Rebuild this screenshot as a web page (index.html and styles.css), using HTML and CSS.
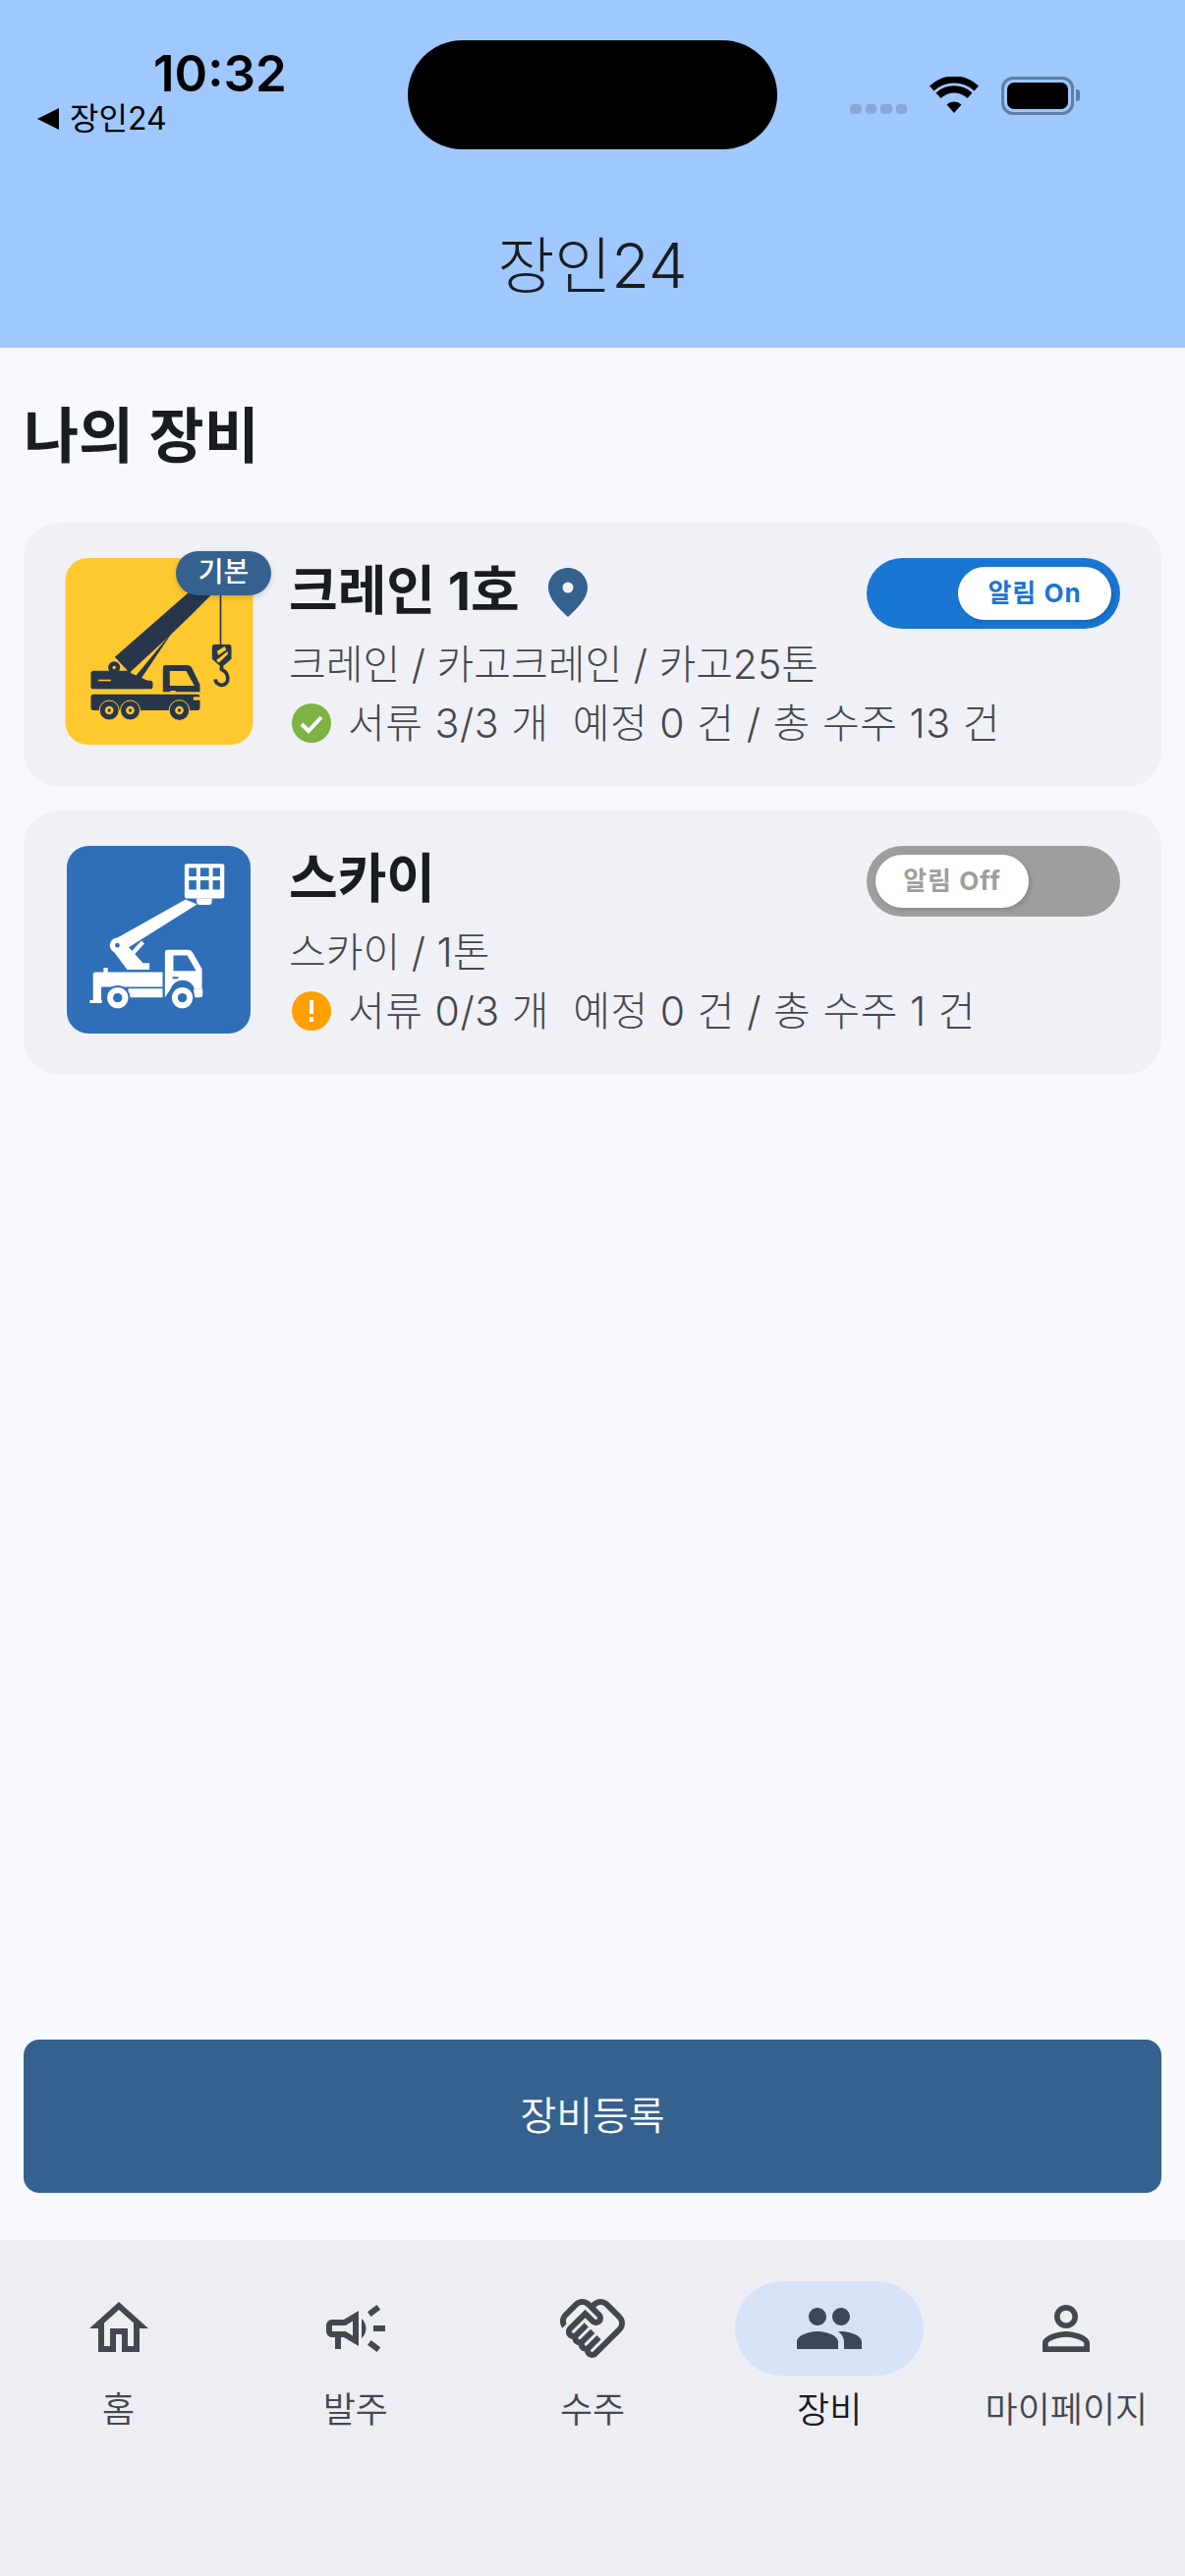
FILE: index.html
```html
<!DOCTYPE html>
<html lang="ko">
<head>
    <meta charset="UTF-8">
    <meta name="viewport" content="width=device-width, initial-scale=1.0">
    <title>장인24</title>
    <link rel="stylesheet" href="styles.css">
</head>
<body>
    <header class="app-header">
        <div class="status-bar">
            <div class="status-left">
                <div class="clock">10:32</div>
                <div class="back-link"><span class="back-arrow"></span>장인24</div>
            </div>
            <div class="island"></div>
            <div class="status-right">
                <div class="signal"><span></span><span></span><span></span><span></span></div>
                <svg class="wifi" viewBox="0 0 50 37">
                    <path d="M25 37 L17.5 28.5 A11 11 0 0 1 32.5 28.5 Z"/>
                    <path d="M11.5 22 L6.5 16.5 A27 27 0 0 1 43.5 16.5 L38.5 22 A19.5 19.5 0 0 0 11.5 22 Z"/>
                    <path d="M4.5 14.5 L0 9.5 A36 36 0 0 1 50 9.5 L45.5 14.5 A30 30 0 0 0 4.5 14.5 Z"/>
                </svg>
                <div class="battery"><div class="battery-level"></div></div>
                <div class="battery-nub"></div>
            </div>
        </div>
        <div class="app-title">장인24</div>
    </header>

    <main class="content">
        <h1 class="section-title">나의 장비</h1>

        <div class="card">
            <div class="thumb">
                <svg class="thumb-img" viewBox="49 38 573 570">
                    <rect x="49" y="38" width="573" height="570" rx="68" fill="#fec82f"/>
                    <g fill="#27364a">
                        <path d="M200 340 L440 130 L495 150 L440 205 L378 265 L245 388 Z"/>
                        <path d="M382 255 L278 410 L262 400 L316 335 Z"/>
                        <circle cx="198" cy="372" r="18"/>
                        <path d="M135 382 H245 L250 390 L300 412 H308 Q316 412 316 420 V430 Q316 438 308 438 H135 Q127 438 127 430 V390 Q127 382 135 382 Z"/>
                        <path d="M355 365 H420 Q430 365 436 375 L460 425 V447 H347 V373 Q347 365 355 365 Z"/>
                        <rect x="127" y="454" width="333" height="49" rx="8"/>
                        <rect x="440" y="462" width="22" height="10" fill="#fec82f"/>
                        <path d="M497 302 H550 Q556 302 556 310 V346 L526 372 L497 346 V310 Q497 302 503 302 Z"/>
                    </g>
                    <circle cx="198" cy="372" r="5" fill="#fec82f"/>
                    <rect x="150" y="409" width="38" height="5" fill="#fec82f"/>
                    <path d="M368 383 H418 L443 428 H368 Z" fill="#fec82f"/>
                    <rect x="370" y="443" width="16" height="5" fill="#fec82f"/>
                    <g class="wheel">
                        <circle cx="183" cy="503" r="30"/>
                        <circle cx="247" cy="503" r="30"/>
                        <circle cx="397" cy="503" r="31"/>
                    </g>
                    <g fill="#fec82f">
                        <circle cx="183" cy="503" r="13"/>
                        <circle cx="247" cy="503" r="13"/>
                        <circle cx="397" cy="503" r="13"/>
                    </g>
                    <g fill="#27364a">
                        <circle cx="183" cy="503" r="5"/>
                        <circle cx="247" cy="503" r="5"/>
                        <circle cx="397" cy="503" r="5"/>
                    </g>
                    <path d="M523 150 V302" stroke="#27364a" stroke-width="5" fill="none"/>
                    <path d="M512 322 L535 308 L541 318 L516 335 Z M510 350 L545 322 V332 L517 358 Z" fill="#fec82f"/>
                    <path d="M526 368 V378 Q546 388 545 406 A19 19 0 0 1 507 408" stroke="#27364a" stroke-width="11" fill="none"/>
                </svg>
                <span class="badge">기본</span>
            </div>
            <div class="info">
                <div class="info-head">
                    <div class="name">크레인 1호</div>
                    <svg class="pin" viewBox="0 0 40 50">
                        <path fill-rule="evenodd" d="M20 0 C9 0 0 8.8 0 20 C0 32 12 42 20 50 C28 42 40 32 40 20 C40 8.8 31 0 20 0 Z M20 14.5 A5.5 5.5 0 1 1 20 25.5 A5.5 5.5 0 1 1 20 14.5 Z"/>
                    </svg>
                    <div class="toggle on"><div class="knob">알림 On</div></div>
                </div>
                <div class="spec">크레인 / 카고크레인 / 카고25톤</div>
                <div class="stat">
                    <svg class="stat-icon" viewBox="0 0 40 40">
                        <circle cx="20" cy="20" r="20" fill="#7cb342"/>
                        <path d="M10 21 L17 28 L30 14" stroke="#fff" stroke-width="4" fill="none"/>
                    </svg>
                    <span>서류 3/3 개&nbsp; 예정 0 건 / 총 수주 13 건</span>
                </div>
            </div>
        </div>

        <div class="card">
            <div class="thumb">
                <svg class="thumb-img sky" viewBox="53 35 560 572">
                    <rect x="53" y="35" width="560" height="572" rx="66" fill="#2e6fb8"/>
                    <g fill="#fff">
                        <rect x="412" y="90" width="121" height="105" rx="6"/>
                        <path d="M448 195 H495 V205 Q495 215 485 215 H460 Q450 215 448 205 Z"/>
                        <path d="M195 322 L415 198 L450 213 L225 355 Z"/>
                        <circle cx="207" cy="338" r="23"/>
                        <path d="M192 352 L222 322 L285 392 H305 V412 H237 Z"/>
                        <path d="M140 420 H165 V406 H178 V420 H345 V465 H158 V505 H160 V514 H123 V505 H133 V428 Q133 420 140 420 Z"/>
                        <path d="M240 470 H345 V497 H240 Z"/>
                        <path d="M360 352 H420 Q432 352 438 362 L465 410 V470 H442 A38 38 0 0 0 370 470 L352 497 V360 Q352 352 360 352 Z"/>
                        <path d="M440 470 H467 V490 Q467 497 460 497 H440 Z"/>
                    </g>
                    <g fill="#2e6fb8">
                        <rect x="425" y="102" width="23" height="26"/>
                        <rect x="460" y="102" width="26" height="26"/>
                        <rect x="498" y="102" width="22" height="26"/>
                        <rect x="425" y="140" width="23" height="28"/>
                        <rect x="460" y="140" width="26" height="28"/>
                        <rect x="498" y="140" width="22" height="28"/>
                        <circle cx="207" cy="338" r="7"/>
                        <path d="M378 369 H420 L447 416 H378 Z"/>
                        <rect x="375" y="434" width="18" height="6"/>
                        <circle cx="208" cy="498" r="38"/>
                        <circle cx="405" cy="498" r="38"/>
                    </g>
                    <path d="M245 372 L285 328" stroke="#fff" stroke-width="13" fill="none"/>
                    <circle cx="208" cy="498" r="32" fill="#fff"/>
                    <circle cx="405" cy="498" r="32" fill="#fff"/>
                    <circle cx="208" cy="498" r="14" fill="#2e6fb8"/>
                    <circle cx="405" cy="498" r="14" fill="#2e6fb8"/>
                </svg>
            </div>
            <div class="info">
                <div class="info-head">
                    <div class="name">스카이</div>
                    <div class="toggle off"><div class="knob">알림 Off</div></div>
                </div>
                <div class="spec">스카이 / 1톤</div>
                <div class="stat">
                    <svg class="stat-icon" viewBox="0 0 40 40">
                        <circle cx="20" cy="20" r="20" fill="#ffa000"/>
                        <rect x="18" y="9" width="4" height="14" fill="#fff"/>
                        <rect x="18" y="26" width="4" height="5" fill="#fff"/>
                    </svg>
                    <span>서류 0/3 개&nbsp; 예정 0 건 / 총 수주 1 건</span>
                </div>
            </div>
        </div>

        <button class="add-btn">장비등록</button>
    </main>

    <nav class="bottom-nav">
        <div class="nav-item">
            <div class="nav-icon">
                <svg viewBox="0 0 24 24"><path d="M12 5.69l5 4.5V18h-2v-6H9v6H7v-7.81l5-4.5M12 3L2 12h3v8h6v-6h2v6h6v-8h3L12 3z"/></svg>
            </div>
            <span class="nav-label">홈</span>
        </div>
        <div class="nav-item">
            <div class="nav-icon">
                <svg viewBox="0 0 24 24"><path d="M18 11v2h4v-2h-4zm-2 6.61c.96.71 2.21 1.65 3.2 2.39.4-.53.8-1.07 1.2-1.6-.99-.74-2.24-1.68-3.2-2.4-.4.54-.8 1.08-1.2 1.61zM20.4 5.6c-.4-.53-.8-1.07-1.2-1.6-.99.74-2.24 1.68-3.2 2.4.4.53.8 1.07 1.2 1.6.96-.72 2.21-1.65 3.2-2.4zM4 9c-1.1 0-2 .9-2 2v2c0 1.1.9 2 2 2h1v4h2v-4h1l5 3V6L8 9H4zm5.03 1.71L11 9.53v4.94l-1.97-1.18-.48-.29H4v-2h4.55l.48-.29zM15.5 12c0-1.33-.58-2.53-1.5-3.35v6.69c.92-.81 1.5-2.01 1.5-3.34z"/></svg>
            </div>
            <span class="nav-label">발주</span>
        </div>
        <div class="nav-item">
            <div class="nav-icon">
                <svg viewBox="0 0 24 24"><path d="M12.22 19.85c-.18.18-.5.21-.71 0-.18-.18-.21-.5 0-.71l3.39-3.39-1.41-1.41-3.39 3.39c-.19.2-.51.19-.71 0-.21-.21-.18-.53 0-.71l3.39-3.39-1.41-1.41-3.39 3.39c-.18.18-.5.21-.71 0-.19-.19-.19-.51 0-.71l3.39-3.39-1.42-1.41-3.39 3.39c-.18.18-.5.21-.71 0-.19-.2-.19-.51 0-.71L9.52 8.4l1.87 1.86c.95.95 2.59.94 3.54 0 .98-.98.98-2.56 0-3.54l-1.86-1.86.28-.28c.78-.78 2.05-.78 2.83 0l4.24 4.24c.78.78.78 2.05 0 2.83l-8.2 8.2zm9.61-6.78c1.56-1.56 1.56-4.09 0-5.66l-4.24-4.24c-1.56-1.56-4.09-1.56-5.66 0l-.28.28-.28-.28c-1.56-1.56-4.09-1.56-5.66 0L2.17 6.71c-1.42 1.42-1.55 3.63-.4 5.19l1.45-1.45c-.39-.75-.26-1.7.37-2.33l3.54-3.54c.78-.78 2.05-.78 2.83 0l3.56 3.56c.18.18.21.5 0 .71-.21.21-.53.18-.71 0L9.52 5.57l-5.8 5.79c-.98.97-.98 2.56 0 3.54.39.39.89.63 1.42.7.07.52.3 1.02.7 1.42.4.4.9.63 1.42.7.07.52.3 1.02.7 1.42.4.4.9.63 1.42.7.07.54.31 1.03.7 1.42.47.47 1.1.73 1.77.73.67 0 1.3-.26 1.77-.73l8.21-8.19z"/></svg>
            </div>
            <span class="nav-label">수주</span>
        </div>
        <div class="nav-item active">
            <div class="nav-icon">
                <svg viewBox="0 0 24 24"><path d="M16 11c1.66 0 2.99-1.34 2.99-3S17.66 5 16 5c-1.66 0-3 1.34-3 3s1.34 3 3 3zm-8 0c1.66 0 2.99-1.34 2.99-3S9.66 5 8 5C6.34 5 5 6.34 5 8s1.34 3 3 3zm0 2c-2.33 0-7 1.17-7 3.5V19h14v-2.5c0-2.33-4.67-3.5-7-3.5zm8 0c-.29 0-.62.02-.97.05 1.16.84 1.97 1.97 1.97 3.45V19h6v-2.5c0-2.33-4.67-3.5-7-3.5z"/></svg>
            </div>
            <span class="nav-label">장비</span>
        </div>
        <div class="nav-item">
            <div class="nav-icon">
                <svg viewBox="0 0 24 24"><path d="M12 5.9c1.16 0 2.1.94 2.1 2.1s-.94 2.1-2.1 2.1S9.9 9.16 9.9 8s.94-2.1 2.1-2.1m0 9c2.97 0 6.1 1.46 6.1 2.1v1.1H5.9V17c0-.64 3.13-2.1 6.1-2.1M12 4C9.79 4 8 5.79 8 8s1.79 4 4 4 4-1.79 4-4-1.79-4-4-4zm0 9c-2.67 0-8 1.34-8 4v3h16v-3c0-2.66-5.33-4-8-4z"/></svg>
            </div>
            <span class="nav-label">마이페이지</span>
        </div>
    </nav>
</body>
</html>
```

FILE: styles.css
```css
* {
    box-sizing: border-box;
}

body {
    font-family: Inter, "Noto Sans CJK KR", sans-serif;
    margin: 0;
    width: 1206px;
    height: 2622px;
    display: flex;
    flex-direction: column;
    background: #f8f9ff;
    color: #191c20;
    overflow: hidden;
}

/* header + fake ios status bar */
.app-header {
    height: 354px;
    background: #9fc8fe;
    padding-top: 41px;
}

.status-bar {
    display: grid;
    grid-template-columns: 415px 376px 1fr;
    height: 111px;
}

.status-left {
    padding: 5px 0 0 38px;
}

.clock {
    font-size: 51px;
    font-weight: 600;
    line-height: 58px;
    margin-left: 118px;
    color: #000;
}

.back-link {
    display: flex;
    align-items: center;
    font-size: 32px;
    line-height: 40px;
    margin-top: -3px;
    color: #000;
}

.back-arrow {
    width: 0;
    height: 0;
    border-top: 11px solid transparent;
    border-bottom: 11px solid transparent;
    border-right: 22px solid #000;
    margin-right: 11px;
}

.island {
    background: #000;
    border-radius: 56px;
}

.status-right {
    display: flex;
    align-items: flex-start;
    padding: 37px 0 0 74px;
}

.signal {
    display: flex;
    gap: 4px;
    margin: 28px 23px 0 0;
}

.signal span {
    width: 11.5px;
    height: 10px;
    border-radius: 4px;
    background: #87a9d3;
}

.wifi {
    width: 50px;
    height: 37px;
    margin-right: 23px;
    fill: #000;
}

.battery {
    width: 74px;
    height: 39px;
    border: 3px solid #5f7ea8;
    border-radius: 12px;
    padding: 3px;
}

.battery-level {
    height: 100%;
    background: #000;
    border-radius: 7px;
}

.battery-nub {
    width: 4px;
    height: 12px;
    margin: 13px 0 0 2px;
    background: #5f7ea8;
    border-radius: 0 3px 3px 0;
}

.app-title {
    text-align: center;
    font-size: 63px;
    line-height: 80px;
    margin-top: 78px;
    font-weight: 300;
}

/* list */
.content {
    flex: 1;
    display: flex;
    flex-direction: column;
    padding: 0 24px 48px;
}

.section-title {
    margin: 0;
    padding: 50px 0 0;
    font-size: 61px;
    line-height: 80px;
    height: 178px;
    font-weight: 600;
}

.card {
    display: flex;
    height: 269px;
    padding: 36px 42px 0;
    margin-bottom: 24px;
    background: #f0f1f7;
    border-radius: 36px;
}

.thumb {
    position: relative;
    width: 192px;
    height: 190px;
    margin-right: 36px;
    flex-shrink: 0;
}

.thumb-img {
    display: block;
    width: 192px;
    height: 190px;
}

.thumb-img.sky {
    width: 187px;
    height: 191px;
    margin-left: 2px;
}

.badge {
    position: absolute;
    top: -7px;
    right: -18px;
    width: 97px;
    height: 45px;
    border-radius: 23px;
    background: #35618f;
    color: #fff;
    font-size: 28px;
    font-weight: 500;
    line-height: 43px;
    text-align: center;
    box-shadow: 0 2px 6px rgba(0, 0, 0, 0.15);
}

.info {
    flex: 1;
    min-width: 0;
}

.info-head {
    display: flex;
    align-items: flex-start;
    height: 72px;
}

.name {
    font-size: 54px;
    font-weight: 700;
    line-height: 68px;
    color: #191c20;
}

.pin {
    width: 40px;
    height: 50px;
    margin: 10px 0 0 29px;
    fill: #35618f;
}

.toggle {
    display: flex;
    width: 258px;
    height: 72px;
    padding: 9px;
    margin-left: auto;
    border-radius: 36px;
}

.toggle.on {
    background: #1976d2;
    justify-content: flex-end;
    color: #1976d2;
}

.toggle.off {
    background: #9e9e9e;
    justify-content: flex-start;
    color: #9e9e9e;
}

.knob {
    width: 156px;
    height: 54px;
    border-radius: 27px;
    background: #fff;
    font-size: 26px;
    font-weight: 700;
    letter-spacing: 1px;
    line-height: 54px;
    text-align: center;
    box-shadow: 2px 2px 5px rgba(0, 0, 0, 0.15);
}

.spec {
    margin-top: 6px;
    font-size: 41px;
    line-height: 60px;
    font-weight: 300;
    color: #44474e;
    white-space: nowrap;
}

.stat {
    display: flex;
    align-items: center;
    font-size: 41px;
    letter-spacing: 0.55px;
    line-height: 60px;
    font-weight: 300;
    color: #44474e;
    white-space: nowrap;
}

.stat-icon {
    width: 40px;
    height: 40px;
    margin: 0 17px 0 3px;
    flex-shrink: 0;
}

.wheel {
    fill: #27364a;
    stroke: #fec82f;
    stroke-width: 3;
}

.add-btn {
    margin-top: auto;
    height: 156px;
    padding-bottom: 8px;
    border: none;
    border-radius: 16px;
    background: #35618f;
    color: #fff;
    font-family: inherit;
    font-size: 40px;
    font-weight: 350;
}

/* bottom nav */
.bottom-nav {
    display: flex;
    height: 342px;
    padding-top: 42px;
    background: #edeef3;
}

.nav-item {
    flex: 1;
    display: flex;
    flex-direction: column;
    align-items: center;
}

.nav-icon {
    display: flex;
    align-items: center;
    justify-content: center;
    width: 192px;
    height: 96px;
    border-radius: 48px;
}

.nav-icon svg {
    width: 72px;
    height: 72px;
    fill: #44474e;
}

.nav-label {
    margin-top: 13px;
    font-size: 36px;
    line-height: 44px;
    font-weight: 350;
    color: #44474e;
}

.nav-item.active .nav-icon {
    background: #d6e3f7;
}

.nav-item.active .nav-icon svg {
    fill: #3b4859;
}

.nav-item.active .nav-label {
    color: #191c20;
}
```
